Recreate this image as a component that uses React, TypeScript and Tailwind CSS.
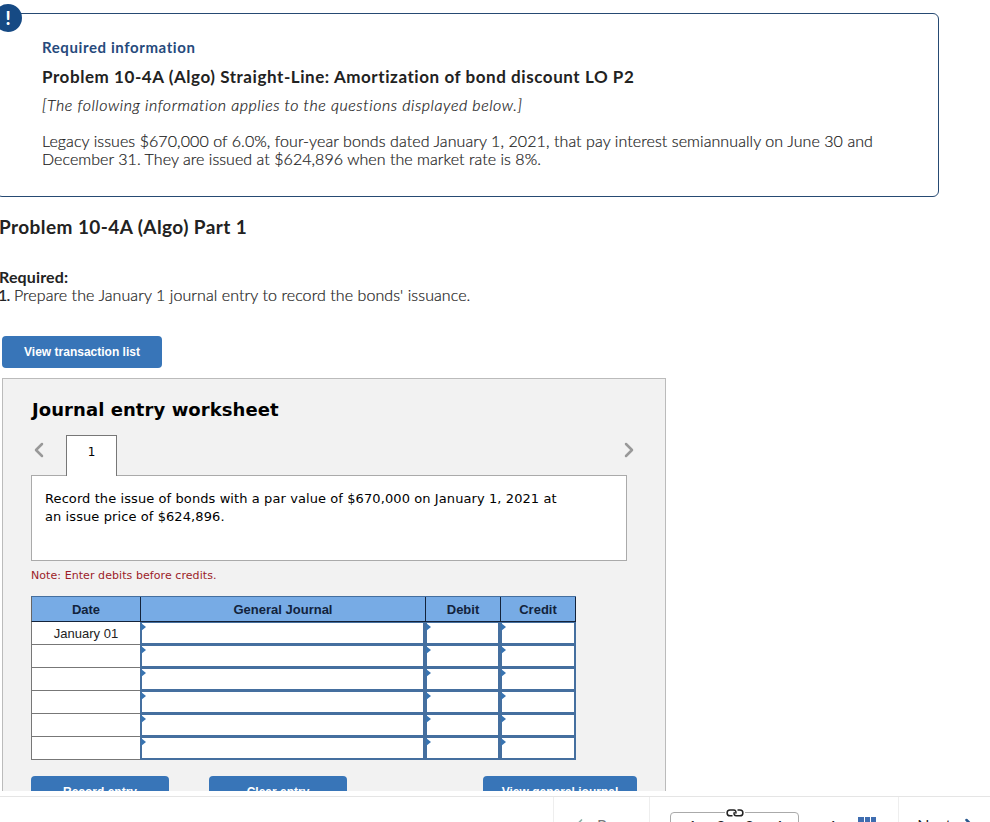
import React from "react";
import { ChevronLeft, ChevronRight } from "lucide-react";

const rows = ["January 01", "", "", "", "", ""];

function EntryCell() {
  return (
    <div className="relative border-l border-[#456f9f] bg-white">
      <div className="h-full border-2 border-l border-t-[1px] border-[#456f9f]" />
      <svg className="absolute left-0 top-px" width="5" height="8" viewBox="0 0 5 8">
        <path d="M0 0L5 4L0 8Z" fill="#3873b0" />
      </svg>
    </div>
  );
}

function RequiredInfo() {
  return (
    <section className="relative -ml-1 mt-[13px] h-[184px] w-[943px] shrink-0 rounded-md border border-[#264a73] pl-[45px] pt-[23px] font-[Lato] text-[#222]">
      <div className="absolute -left-[3px] -top-[10px] flex h-7 w-7 items-center justify-center rounded-full bg-[#164a84] text-lg font-black text-white">
        !
      </div>
      <h3 className="h-5 whitespace-nowrap text-[15px] font-bold leading-5 tracking-[0.6px] text-[#264a7c]">Required information</h3>
      <h2 className="mt-[10px] h-5 whitespace-nowrap text-[17px] font-bold leading-5 tracking-[0.56px]">
        Problem 10-4A (Algo) Straight-Line: Amortization of bond discount LO P2
      </h2>
      <p className="mt-[8px] h-5 whitespace-nowrap text-[16px] font-light italic leading-5 tracking-[0.56px] [-webkit-text-stroke:0.2px_#222]">
        [The following information applies to the questions displayed below.]
      </p>
      <div className="mt-[17px] whitespace-nowrap text-[16px] font-light leading-[18px] [-webkit-text-stroke:0.2px_#222]">
        <p className="tracking-[0.08px]">
          Legacy issues $670,000 of 6.0%, four-year bonds dated January 1, 2021, that pay interest semiannually on June 30 and
        </p>
        <p className="tracking-[0.05px]">December 31. They are issued at $624,896 when the market rate is 8%.</p>
      </div>
    </section>
  );
}

function Worksheet() {
  return (
    <section className="ml-[2px] mt-[10px] h-[440px] w-[664px] shrink-0 border border-[#bbb] bg-[#f2f2f2] pl-7 pt-[19px]">
      <h2 className="h-6 whitespace-nowrap pl-px font-['DejaVu_Sans'] text-[18px] font-bold leading-6 tracking-[0.07px] text-black">Journal entry worksheet</h2>

      {/* Tab strip */}
      <div className="mt-[13px] flex h-[40px] w-[610px]">
        <ChevronLeft className="-ml-1 mt-[3px] text-[#999]" size={24} strokeWidth={2.5} />
        <div className="relative z-10 ml-[15px] h-[41px] w-[51px] border border-b-0 border-[#777] bg-white pt-[7px] text-center font-['DejaVu_Sans'] text-[12px] leading-[18px]">
          1
        </div>
        <ChevronRight className="ml-auto mt-[3px] text-[#999]" size={24} strokeWidth={2.5} />
      </div>
      <div className="h-[86px] w-[596px] border border-[#aaa] bg-white pl-[13px] pt-[14px] font-['DejaVu_Sans'] text-[13px] leading-[18px] tracking-[0.09px] text-black">
        <p className="whitespace-nowrap">Record the issue of bonds with a par value of $670,000 on January 1, 2021 at</p>
        <p className="whitespace-nowrap">an issue price of $624,896.</p>
      </div>
      <p className="mt-[6px] h-[18px] whitespace-nowrap font-['DejaVu_Sans'] text-[11px] leading-[18px] tracking-[0.07px] text-[#9c1c28]">
        Note: Enter debits before credits.
      </p>

      {/* Journal table */}
      <div className="mt-[11px] w-[545px] font-['Liberation_Sans'] text-[13px]">
        <div className="grid h-[26px] grid-cols-[109px_285px_75px_76px] border-t border-[#456f9f] bg-[#77abe5] text-center font-bold leading-[23px] text-[#12233c]">
          <div className="border-b border-l border-[#14233a] border-l-[#666] pt-px">Date</div>
          <div className="border-b border-l border-[#14233a] pt-px">General Journal</div>
          <div className="border-b border-l border-[#14233a] pt-px">Debit</div>
          <div className="border-x border-b border-[#14233a] pt-px">Credit</div>
        </div>
        {rows.map((date, i) => (
          <div key={i} className="grid h-[23px] grid-cols-[109px_285px_75px_76px]">
            <div className="border-b border-l border-[#777] bg-white pt-px text-center leading-[21px] text-[#222]">{date}</div>
            <EntryCell />
            <EntryCell />
            <EntryCell />
          </div>
        ))}
      </div>

      <div className="mt-4 flex font-['Liberation_Sans'] text-[12px] font-bold text-white">
        <button className="h-8 w-[138px] rounded-sm bg-[#3875b8]">Record entry</button>
        <button className="ml-10 h-8 w-[138px] rounded-sm bg-[#3875b8]">Clear entry</button>
        <button className="ml-[136px] h-8 w-[154px] rounded-sm bg-[#3875b8]">View general journal</button>
      </div>
    </section>
  );
}

function BottomNav() {
  return (
    <footer className="mt-[5px] flex h-[26px] overflow-hidden border-t border-[#e5e5e5] font-[Lato] text-[16px] leading-[20px] text-[#222]">
      <div className="ml-[553px] flex h-[60px] w-[97px] shrink-0 border-x border-[#eee] pl-[15px] pt-[18px] text-[#777]">
        <ChevronLeft size={20} className="text-[#8ab0a8]" />
        <span className="ml-[8px]">Prev</span>
      </div>
      <div className="relative ml-5 mt-[15px] flex h-10 w-[129px] shrink-0 rounded-sm border border-[#aaa] pl-[7px] pt-[3px]">
        <div className="absolute left-[54px] -top-[4px] bg-white px-px">
          <svg className="block" width="18" height="8" viewBox="0 0 18 8" fill="none" stroke="#222" strokeWidth="1.5">
            <path d="M6.5 6.8H4A2.9 2.9 0 0 1 4 1H7.5C9.6 1 10.6 2.6 9.6 4.6" />
            <path d="M11.5 1H14A2.9 2.9 0 0 1 14 6.8H10.5C8.4 6.8 7.4 5.2 8.4 3.2" />
          </svg>
        </div>
        <span className="w-[29px] text-center">1</span>
        <span className="w-[28px] text-center">2</span>
        <span className="w-[29px] text-center">3</span>
        <span className="w-[29px] text-center">4</span>
      </div>
      <span className="ml-[28px] mt-[19px]">4</span>
      <div className="ml-[22px] mt-[20px] grid h-[18px] w-[18px] shrink-0 grid-cols-3 gap-px">
        {Array.from({ length: 9 }, (_, i) => (
          <div key={i} className="bg-[#3f6db0]" />
        ))}
      </div>
      <div className="ml-[22px] flex h-[60px] border-l border-[#eee] pl-[18px] pt-[18px]">
        <span>Next</span>
        <ChevronRight size={20} strokeWidth={3} className="ml-[8px] text-[#27568c]" />
      </div>
    </footer>
  );
}

export default function App() {
  return (
    <div className="h-[822px] w-[990px] overflow-hidden bg-white [font-variant-ligatures:none]">
      <div className="flex h-[791px] flex-col overflow-hidden">
        <RequiredInfo />
        <h2 className="-ml-px mt-[18px] h-6 whitespace-nowrap font-[Lato] text-[19px] font-bold leading-6 tracking-[0.42px] text-[#222]">Problem 10-4A (Algo) Part 1</h2>
        <div className="mt-[29px] h-9 whitespace-nowrap font-[Lato] text-[16px] font-light leading-[18px] text-[#222]">
          <p className="-ml-px font-bold tracking-[0.15px]">Required:</p>
          <p className="tracking-[0.08px] [-webkit-text-stroke:0.2px_#222]">
            <b className="-ml-[2px] tracking-[-0.8px]">1.</b> Prepare the January 1 journal entry to record the bonds' issuance.
          </p>
        </div>
        <button className="ml-[2px] mt-[32px] h-8 w-40 shrink-0 rounded-sm bg-[#3875b8] font-['Liberation_Sans'] text-[12px] font-bold text-white">
          View transaction list
        </button>
        <Worksheet />
      </div>
      <BottomNav />
    </div>
  );
}
